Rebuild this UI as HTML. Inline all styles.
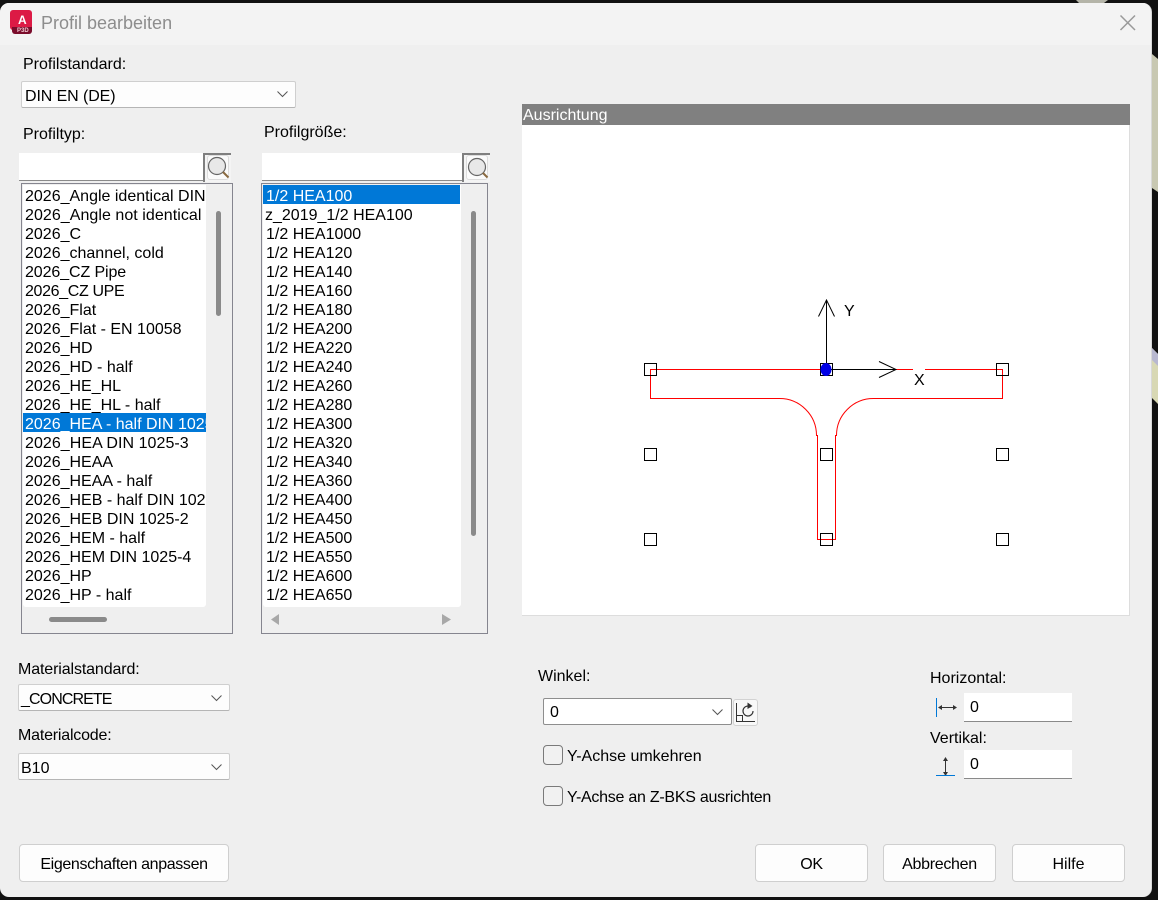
<!DOCTYPE html>
<html><head><meta charset="utf-8"><style>
html,body{margin:0;padding:0;background:#000;}
#s{position:relative;width:1158px;height:900px;overflow:hidden;background:#111;font:16px/19px "Liberation Sans",sans-serif;color:#000;}
#s div{position:absolute;white-space:nowrap;box-sizing:border-box;}
.t{position:absolute;white-space:nowrap;margin-top:2px;}
.combo{background:#fdfdfd;border:1px solid #cfcfcf;border-bottom-color:#b5b5b5;border-radius:2px;}
#s .btn{background:#fdfdfd;border:1px solid #cfcfcf;border-radius:4px;text-align:center;line-height:40px;}
.list{background:#efefef;border:1px solid #85858f;}
.inp{background:#fff;border-bottom:1px solid #8a8a8a;}
.sb{background:#8a8a8a;border-radius:3px;}
.cb{background:#f1f1f1;border:1px solid #7a7a7a;border-radius:4px;}
svg{position:absolute;overflow:visible;}
</style></head><body><div id="s">
<svg style="left:0;top:0" width="1158" height="900">
<path d="M1076 0 H1108 L1104 3 H1079 Z" fill="#b4b4a8"/>
<path d="M1152 54 L1158 59 V192 L1152 188 Z" fill="#c8c8b2"/>
<path d="M1152 348 L1158 354 V404 L1152 398 Z" fill="#d8d8b4"/>
<path d="M1152 348 L1158 354 V366 L1152 360 Z" fill="#b8b8d0"/>
</svg>
<div style="left:0;top:3px;width:1152px;height:894px;background:#efefef;border-radius:9px;overflow:hidden;border-right:1px solid #d8d8d8">
<div style="left:0;top:0;width:1152px;height:42px;background:#f3f3f3"></div>
</div>

<div style="left:10px;top:10px;width:22px;height:20px;background:#dc1a45;border-radius:3px 3px 0 3px"></div>
<div style="left:12px;top:27px;width:20px;height:7px;background:#7a0c2b;border-radius:0 0 3px 3px"></div>
<span class="t" style="left:18px;top:11px;color:#fff;font-weight:bold;font-size:12px;line-height:14px">A</span>
<span class="t" style="left:17px;top:26px;color:#f0c8d0;font-weight:bold;font-size:6px;line-height:7px">P3D</span>
<span class="t" style="left:41px;top:11px;font-size:18px;line-height:20px;color:#8d8d8d">Profil bearbeiten</span>
<svg style="left:1119px;top:14px" width="18" height="18"><path d="M1.500 1.500 L16 16 M16 1.500 L1.500 16" stroke="#999" stroke-width="1.500" fill="none"/></svg>

<span class="t" style="left:23px;top:53px">Profilstandard:</span>
<div class="combo" style="left:21px;top:81px;width:275px;height:27px"></div>
<span class="t" style="left:25px;top:85px;letter-spacing:-.1px">DIN EN (DE)</span>
<svg style="left:277px;top:91px" width="11" height="7"><path d="M.5 .5 L5.500 5.500 L10.500 .5" stroke="#555" fill="none"/></svg>

<span class="t" style="left:23px;top:123px">Profiltyp:</span>
<span class="t" style="left:264px;top:121px">Profilgröße:</span>

<div class="inp" style="left:19px;top:153px;width:184px;height:28px"></div>
<div style="left:203px;top:153px;width:28px;height:29px;background:#f4f4f4;border-left:2px solid #7f7f7f;border-top:2px solid #7f7f7f"></div>
<div style="left:207px;top:155px;width:22px;height:25px;background:#fbfbfb;border:1px solid #dcdcdc;border-radius:3px"></div>
<svg style="left:207px;top:156px" width="24" height="24"><circle cx="10" cy="10" r="8.500" fill="#e8e8e8" stroke="#666" stroke-width="1.200"/><path d="M16 16 L21.500 21.500" stroke="#8a6a40" stroke-width="2"/></svg>
<div class="inp" style="left:262px;top:153px;width:201px;height:28px"></div>
<div style="left:462px;top:153px;width:28px;height:29px;background:#f4f4f4;border-left:2px solid #7f7f7f;border-top:2px solid #7f7f7f"></div>
<div style="left:466px;top:155px;width:22px;height:25px;background:#fbfbfb;border:1px solid #dcdcdc;border-radius:3px"></div>
<svg style="left:467px;top:157px" width="24" height="24"><circle cx="10" cy="10" r="8.500" fill="#e8e8e8" stroke="#666" stroke-width="1.200"/><path d="M16 16 L20.500 20.500" stroke="#8a6a40" stroke-width="2"/></svg>

<div class="list" style="left:21px;top:183px;width:212px;height:451px"></div>
<div style="left:23px;top:185px;width:183px;height:422px;background:#fff;border-radius:0 0 3px 3px"></div>
<div style="left:23px;top:413px;width:183px;height:19px;background:#0078d7"></div>
<div style="left:23px;top:185px;width:183px;height:422px;overflow:hidden">
<span class="t" style="left:2px;top:0">2026_Angle identical DIN</span>
<span class="t" style="left:2px;top:19px;letter-spacing:.05px">2026_Angle not identical</span>
<span class="t" style="left:2px;top:38px">2026_C</span>
<span class="t" style="left:2px;top:57px">2026_channel, cold</span>
<span class="t" style="left:2px;top:76px;letter-spacing:-.1px">2026_CZ Pipe</span>
<span class="t" style="left:2px;top:95px;letter-spacing:-.35px">2026_CZ UPE</span>
<span class="t" style="left:2px;top:114px">2026_Flat</span>
<span class="t" style="left:2px;top:133px">2026_Flat - EN 10058</span>
<span class="t" style="left:2px;top:152px">2026_HD</span>
<span class="t" style="left:2px;top:171px">2026_HD - half</span>
<span class="t" style="left:2px;top:190px">2026_HE_HL</span>
<span class="t" style="left:2px;top:209px">2026_HE_HL - half</span>
<span class="t" style="left:2px;top:228px;color:#fff">2026_HEA - half DIN 1025-3</span>
<span class="t" style="left:2px;top:247px;letter-spacing:.05px">2026_HEA DIN 1025-3</span>
<span class="t" style="left:2px;top:266px">2026_HEAA</span>
<span class="t" style="left:2px;top:285px">2026_HEAA - half</span>
<span class="t" style="left:2px;top:304px">2026_HEB - half DIN 1025-2</span>
<span class="t" style="left:2px;top:323px">2026_HEB DIN 1025-2</span>
<span class="t" style="left:2px;top:342px">2026_HEM - half</span>
<span class="t" style="left:2px;top:361px">2026_HEM DIN 1025-4</span>
<span class="t" style="left:2px;top:380px">2026_HP</span>
<span class="t" style="left:2px;top:399px">2026_HP - half</span>
</div>
<div class="sb" style="left:216px;top:211px;width:5px;height:105px"></div>
<div class="sb" style="left:49px;top:617px;width:58px;height:5px"></div>

<div class="list" style="left:261px;top:183px;width:227px;height:451px"></div>
<div style="left:263px;top:185px;width:198px;height:422px;background:#fff;border-radius:0 0 3px 3px"></div>
<div style="left:263px;top:185px;width:197px;height:19px;background:#0078d7"></div>
<div style="left:263px;top:185px;width:198px;height:422px;overflow:hidden">
<span class="t" style="left:3px;top:0;color:#fff">1/2 HEA100</span>
<span class="t" style="left:2px;top:19px">z_2019_1/2 HEA100</span>
<span class="t" style="left:3px;top:38px">1/2 HEA1000</span>
<span class="t" style="left:3px;top:57px">1/2 HEA120</span>
<span class="t" style="left:3px;top:76px">1/2 HEA140</span>
<span class="t" style="left:3px;top:95px">1/2 HEA160</span>
<span class="t" style="left:3px;top:114px">1/2 HEA180</span>
<span class="t" style="left:3px;top:133px">1/2 HEA200</span>
<span class="t" style="left:3px;top:152px">1/2 HEA220</span>
<span class="t" style="left:3px;top:171px">1/2 HEA240</span>
<span class="t" style="left:3px;top:190px">1/2 HEA260</span>
<span class="t" style="left:3px;top:209px">1/2 HEA280</span>
<span class="t" style="left:3px;top:228px">1/2 HEA300</span>
<span class="t" style="left:3px;top:247px">1/2 HEA320</span>
<span class="t" style="left:3px;top:266px">1/2 HEA340</span>
<span class="t" style="left:3px;top:285px">1/2 HEA360</span>
<span class="t" style="left:3px;top:304px">1/2 HEA400</span>
<span class="t" style="left:3px;top:323px">1/2 HEA450</span>
<span class="t" style="left:3px;top:342px">1/2 HEA500</span>
<span class="t" style="left:3px;top:361px">1/2 HEA550</span>
<span class="t" style="left:3px;top:380px">1/2 HEA600</span>
<span class="t" style="left:3px;top:399px">1/2 HEA650</span>
</div>
<div class="sb" style="left:471px;top:211px;width:5px;height:325px"></div>
<svg style="left:271px;top:614px" width="9" height="11"><path d="M8 0 L8 11 L0 5.500Z" fill="#a8a8a8"/></svg>
<svg style="left:442px;top:614px" width="9" height="11"><path d="M0 0 L0 11 L9 5.500Z" fill="#a8a8a8"/></svg>

<span class="t" style="left:18px;top:658px;letter-spacing:-.12px">Materialstandard:</span>
<div class="combo" style="left:18px;top:684px;width:212px;height:27px"></div>
<span class="t" style="left:21px;top:688px;letter-spacing:-.9px">_CONCRETE</span>
<svg style="left:211px;top:695px" width="11" height="7"><path d="M.5 .5 L5.500 5.500 L10.500 .5" stroke="#555" fill="none"/></svg>
<span class="t" style="left:18px;top:724px;letter-spacing:-.2px">Materialcode:</span>
<div class="combo" style="left:18px;top:753px;width:212px;height:27px"></div>
<span class="t" style="left:21px;top:757px">B10</span>
<svg style="left:211px;top:764px" width="11" height="7"><path d="M.5 .5 L5.500 5.500 L10.500 .5" stroke="#555" fill="none"/></svg>

<div style="left:522px;top:104px;width:608px;height:21px;background:#808080"></div>
<span class="t" style="left:523px;top:104px;color:#fff">Ausrichtung</span>
<div style="left:522px;top:125px;width:608px;height:491px;background:#fff;border-right:1px solid #ddd;border-bottom:1px solid #ddd"></div>

<svg style="left:0;top:0" width="1158" height="900">
<path d="M650.500 369.500 H1002.500 V398.500 H873.500 A37 37 0 0 0 836.500 435.500 H835.500 V539.500 H817.500 V435.500 H816.500 A37 37 0 0 0 779.500 398.500 H650.500 Z" fill="none" stroke="#f00" stroke-width="1"/>
<rect x="913" y="366" width="12" height="6" fill="#fff"/>
<g fill="none" stroke="#000" stroke-width="1">
<rect x="644.500" y="363.500" width="12" height="12"/><rect x="820.500" y="363.500" width="12" height="12"/><rect x="996.500" y="363.500" width="12" height="12"/>
<rect x="644.500" y="448.500" width="12" height="12"/><rect x="820.500" y="448.500" width="12" height="12"/><rect x="996.500" y="448.500" width="12" height="12"/>
<rect x="644.500" y="533.500" width="12" height="12"/><rect x="820.500" y="533.500" width="12" height="12"/><rect x="996.500" y="533.500" width="12" height="12"/>
<path d="M826.500 369 V300 M818.500 316.500 L826.500 300 L834.500 316.500 M826 369.500 H896 M879 361.500 L896 369.500 L879 377.500"/>
</g>
<ellipse cx="826" cy="369.500" rx="5.500" ry="6.500" fill="#0000e6"/>
</svg>
<span class="t" style="left:844px;top:300px">Y</span>
<span class="t" style="left:914px;top:369px">X</span>

<span class="t" style="left:538px;top:665px">Winkel:</span>
<div style="left:543px;top:698px;width:189px;height:27px;background:#fff;border:1px solid #8e8e8e;border-radius:2px"></div>
<span class="t" style="left:550px;top:701px">0</span>
<svg style="left:712px;top:709px" width="11" height="7"><path d="M.5 .5 L5.500 5.500 L10.500 .5" stroke="#555" fill="none"/></svg>
<div style="left:733px;top:699px;width:25px;height:27px;background:#f8f8f8;border:1px solid #d2d2d2;border-radius:3px"></div>
<svg style="left:736px;top:702px" width="20" height="20"><path d="M.5 1 V19.500 H19 M.5 13.500 H6.500 V19.500" stroke="#333" fill="none"/><path d="M15 5 A5 5 0 1 0 17 9" stroke="#333" stroke-width="1.200" fill="none"/><path d="M11.500 .5 L16.500 4 L11.500 7Z" fill="#333"/></svg>

<div class="cb" style="left:543px;top:745px;width:20px;height:20px"></div>
<span class="t" style="left:567px;top:745px">Y-Achse umkehren</span>
<div class="cb" style="left:543px;top:786px;width:20px;height:20px"></div>
<span class="t" style="left:567px;top:786px;letter-spacing:-.26px">Y-Achse an Z-BKS ausrichten</span>

<span class="t" style="left:930px;top:667px">Horizontal:</span>
<div style="left:936px;top:698px;width:1px;height:19px;background:#0078d7"></div>
<svg style="left:938px;top:703px" width="20" height="9"><path d="M2 4.500 H17" stroke="#333"/><path d="M0 4.500 L4 2 V7Z M19 4.500 L15 2 V7Z" fill="#333"/></svg>
<div class="inp" style="left:964px;top:693px;width:108px;height:29px"></div>
<span class="t" style="left:970px;top:696px">0</span>
<span class="t" style="left:930px;top:727px">Vertikal:</span>
<svg style="left:941px;top:757px" width="9" height="19"><path d="M4.500 2 V17" stroke="#333"/><path d="M4.500 0 L2 4 H7Z M4.500 19 L2 15 H7Z" fill="#333"/></svg>
<div style="left:936px;top:775px;width:19px;height:1px;background:#0078d7"></div>
<div class="inp" style="left:964px;top:750px;width:108px;height:29px"></div>
<span class="t" style="left:970px;top:753px">0</span>

<div class="btn" style="left:19px;top:844px;width:210px;height:38px;letter-spacing:-.36px">Eigenschaften anpassen</div>
<div class="btn" style="left:755px;top:844px;width:113px;height:38px;letter-spacing:-.3px">OK</div>
<div class="btn" style="left:883px;top:844px;width:113px;height:38px;letter-spacing:-.3px">Abbrechen</div>
<div class="btn" style="left:1012px;top:844px;width:113px;height:38px">Hilfe</div>
</div></body></html>
